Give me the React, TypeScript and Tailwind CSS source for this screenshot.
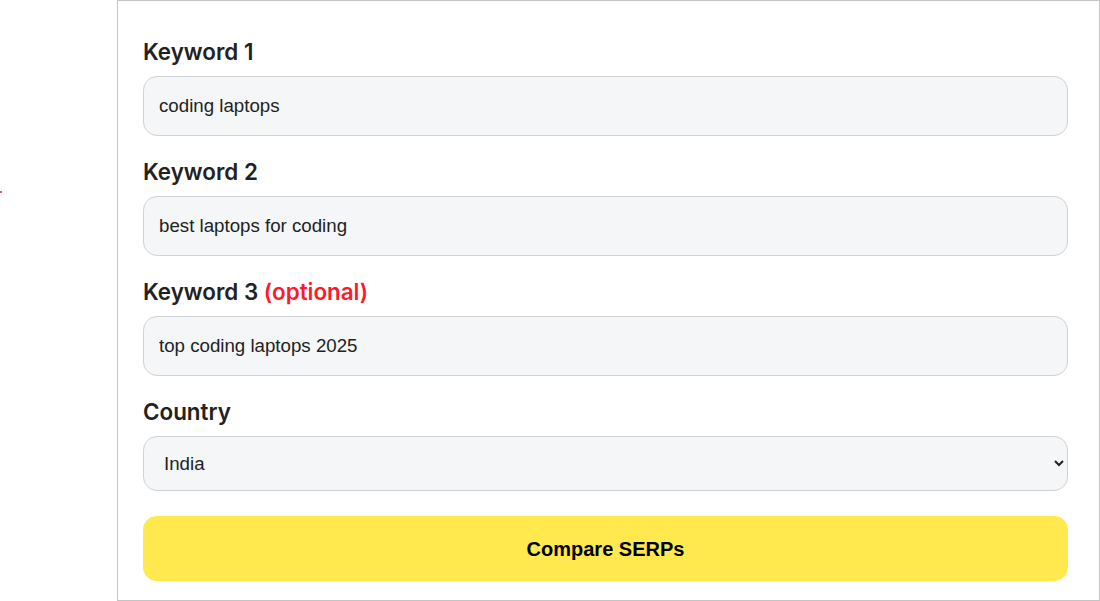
import React, { useState } from "react";

const inter = { fontFamily: "Inter, 'Noto Sans', sans-serif" };
const arial = { fontFamily: "'Liberation Sans', Arial, sans-serif" };

const App: React.FC = () => {
  const [k1, setK1] = useState("coding laptops");
  const [k2, setK2] = useState("best laptops for coding");
  const [k3, setK3] = useState("top coding laptops 2025");
  const [country, setCountry] = useState("in");

  const inputCls =
    "w-full h-[60px] px-[15px] rounded-[14px] border border-[#d0d2d6] bg-[#f5f6f8] text-[18.7px] text-[#222] outline-none";
  const labelCls = "block text-[22.4px] leading-[28px] font-semibold text-[#222] mb-[10px]";

  return (
    <div className="w-[1100px] h-[601px] bg-white flex overflow-hidden" style={inter}>
      <div className="w-[117px] shrink-0 pt-[191px]">
        <div className="w-[2px] h-[2px] bg-[#e0606a]" />
      </div>

      <form
        onSubmit={(e) => e.preventDefault()}
        className="w-[983px] h-[601px] border border-[#c4c4c4] pl-[25px] pr-[31px] pt-[37px] flex flex-col"
      >
        <label className={labelCls}>Keyword 1</label>
        <input value={k1} onChange={(e) => setK1(e.target.value)} className={inputCls} style={arial} />

        <label className={`${labelCls} mt-[22px]`}>Keyword 2</label>
        <input value={k2} onChange={(e) => setK2(e.target.value)} className={inputCls} style={arial} />

        <label className={`${labelCls} mt-[22px]`}>
          Keyword 3 <span className="text-[#ff1a2b]">(optional)</span>
        </label>
        <input value={k3} onChange={(e) => setK3(e.target.value)} className={inputCls} style={arial} />

        <label className={`${labelCls} mt-[22px]`}>Country</label>
        <select
          value={country}
          onChange={(e) => setCountry(e.target.value)}
          className="w-full h-[55px] px-[16px] rounded-[14px] border border-[#d0d2d6] bg-[#f5f6f8] text-[18.7px] text-[#222] outline-none"
          style={arial}
        >
          <option value="in">India</option>
          <option value="us">United States</option>
          <option value="uk">United Kingdom</option>
        </select>

        <button
          type="submit"
          className="mt-[25px] w-full h-[65px] rounded-[14px] bg-[#ffe94f] text-black text-[20px] font-bold"
          style={arial}
        >
          Compare SERPs
        </button>
      </form>
    </div>
  );
};

export default App;
